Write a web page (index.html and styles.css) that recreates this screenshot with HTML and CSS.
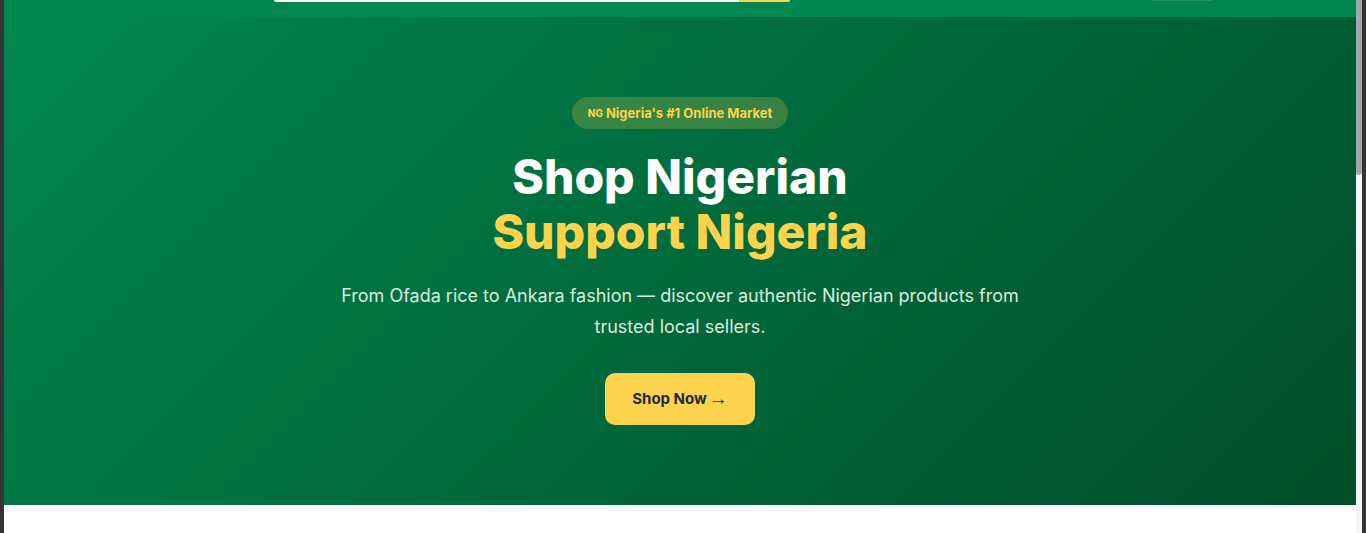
FILE: index.html
```html
<!DOCTYPE html>
<html lang="en">
<head>
<meta charset="utf-8">
<title>Shop Nigerian</title>
<link rel="stylesheet" href="styles.css">
</head>
<body>
<div class="frame">
  <div class="viewport">
    <header class="topbar">
      <div class="search">
        <div class="search-input"></div>
        <div class="search-btn"></div>
      </div>
      <div class="account"></div>
    </header>
    <section class="hero">
      <span class="badge"><span class="flag">NG</span> Nigeria's #1 Online Market</span>
      <h1 class="title"><span class="line-white">Shop Nigerian</span><span class="line-yellow">Support Nigeria</span></h1>
      <p class="lead">From Ofada rice to Ankara fashion — discover authentic Nigerian products from trusted local sellers.</p>
      <a class="cta" href="#">Shop Now<span class="arrow">→</span></a>
    </section>
    <section class="rest"></section>
  </div>
  <div class="scrollbar"><div class="thumb"></div></div>
</div>
</body>
</html>
```

FILE: styles.css
```css
* { box-sizing: border-box; }
html, body { margin: 0; padding: 0; }
body {
  background: #333333;
  font-family: Inter, "Noto Sans", sans-serif;
  overflow: hidden;
}
.frame {
  margin: 0 4px;
  height: 533px;
  background: #ffffff;
  display: flex;
}
.viewport {
  flex: 1;
  height: 533px;
  overflow: hidden;
}
.scrollbar {
  width: 6px;
  height: 533px;
  background: #f3f4f6;
}
.thumb {
  height: 175px;
  background: #a3a6b1;
  border-radius: 0 0 3px 3px;
}

.topbar {
  height: 17px;
  background: #008751;
  display: flex;
  align-items: flex-start;
  padding-left: 270px;
}
.search { display: flex; }
.search-input {
  width: 465px;
  height: 2px;
  background: #ffffff;
  border-bottom-left-radius: 4px;
}
.search-btn {
  width: 51px;
  height: 2px;
  background: #fcd34d;
  border-bottom-right-radius: 4px;
}
.account {
  margin-left: 363px;
  width: 60px;
  height: 1px;
  background: rgba(255,255,255,0.12);
  border-radius: 0 0 3px 3px;
}

.hero {
  background: linear-gradient(135deg, #008751 0%, #006a3c 50%, #004d2a 100%);
  padding: 80px 20px;
  display: flex;
  flex-direction: column;
  align-items: center;
  text-align: center;
}
.badge {
  display: inline-flex;
  align-items: center;
  gap: 3px;
  height: 32px;
  padding: 0 16px;
  border-radius: 16px;
  background: rgba(252, 211, 77, 0.22);
  color: #fcd34d;
  font-weight: 700;
  font-size: 13px;
}
.flag { font-size: 10px; font-weight: 800; }
.title {
  margin: 20px 0 0;
  font-size: 48px;
  line-height: 55px;
  font-weight: 800;
  display: flex;
  flex-direction: column;
}
.line-white { color: #ffffff; }
.line-yellow { color: #fcd34d; }
.lead {
  margin: 21px 0 0;
  max-width: 700px;
  font-size: 18px;
  line-height: 31px;
  color: #dcebdf;
}
.cta {
  margin-top: 31px;
  display: inline-flex;
  align-items: center;
  justify-content: center;
  gap: 2px;
  width: 150px;
  height: 52px;
  padding-bottom: 2px;
  border-radius: 10px;
  background: #fcd34d;
  color: #1f2937;
  font-weight: 700;
  font-size: 15px;
  text-decoration: none;
}
.arrow {
  font-family: "Liberation Sans", sans-serif;
  font-weight: 400;
  font-size: 19px;
  line-height: 1;
}
.rest { height: 1118px; background: #ffffff; }
```
